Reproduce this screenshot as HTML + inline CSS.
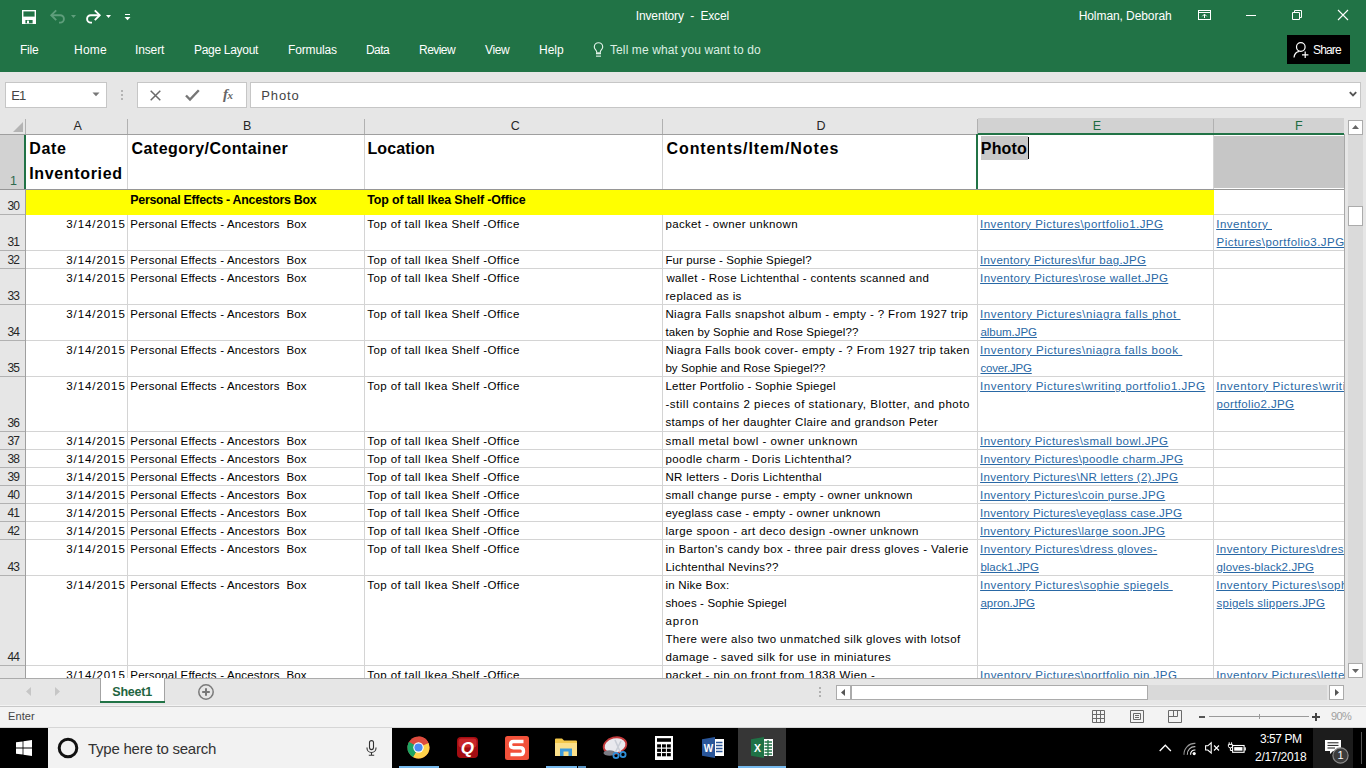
<!DOCTYPE html>
<html><head><meta charset="utf-8"><title>Inventory - Excel</title>
<style>
html,body{margin:0;padding:0}
body{width:1366px;height:768px;overflow:hidden;position:relative;background:#e6e6e6;font-family:"Liberation Sans",sans-serif;}
.t{position:absolute;white-space:pre;line-height:1;display:block}
.b{position:absolute}
svg{position:absolute;overflow:visible}
#cells{position:absolute;left:0;top:0;width:1344px;height:678px;overflow:hidden}
</style></head><body>
<div class="b" style="left:0px;top:0px;width:1366px;height:72px;background:#217346;"></div><div class="b" style="left:5px;top:82px;width:102px;height:26px;background:#fff;border:1px solid #c6c6c6;box-sizing:border-box;"></div><div class="b" style="left:137px;top:82px;width:110px;height:26px;background:#fff;border:1px solid #c6c6c6;box-sizing:border-box;"></div><div class="b" style="left:250px;top:82px;width:1111px;height:26px;background:#fff;border:1px solid #c6c6c6;box-sizing:border-box;"></div><svg style="left:22px;top:10px" width="14" height="14" viewBox="0 0 14 14" ><rect x="0.7" y="0.7" width="12.6" height="12.6" fill="none" stroke="#fff" stroke-width="1.4"/><rect x="1" y="6.6" width="12" height="7" fill="#fff"/><rect x="3.4" y="10" width="7.2" height="3.4" fill="#217346"/><rect x="5" y="10.6" width="2" height="2.8" fill="#fff"/></svg><svg style="left:50px;top:9px" width="16" height="15" viewBox="0 0 16 15" ><path d="M1.3 6.2H10.2A3.7 3.7 0 0 1 10.2 13.6H9" fill="none" stroke="#5f9e7c" stroke-width="1.9"/><path d="M6.2 1.3L1.3 6.2L6.2 11.1" fill="none" stroke="#5f9e7c" stroke-width="1.9"/></svg><svg style="left:71px;top:15px" width="6" height="3" viewBox="0 0 6 3" ><path d="M0 0H5L2.5 3Z" fill="#5f9e7c"/></svg><svg style="left:85px;top:9px" width="16" height="15" viewBox="0 0 16 15" ><path d="M14.7 6.2H5.8A3.7 3.7 0 0 0 5.8 13.6H7" fill="none" stroke="#fff" stroke-width="1.9"/><path d="M9.8 1.3L14.7 6.2L9.8 11.1" fill="none" stroke="#fff" stroke-width="1.9"/></svg><svg style="left:106px;top:15px" width="6" height="3" viewBox="0 0 6 3" ><path d="M0 0H5L2.5 3Z" fill="#fff"/></svg><svg style="left:124px;top:13px" width="7" height="8" viewBox="0 0 7 8" ><rect x="1" y="1" width="5" height="1" fill="#fff"/><path d="M0.5 4H6.5L3.5 7.3Z" fill="#fff"/></svg><svg style="left:1198px;top:10px" width="14" height="11" viewBox="0 0 14 11" ><rect x="0.5" y="0.5" width="12" height="9" fill="none" stroke="#fff" stroke-width="1"/><path d="M0.5 2.5H12.5M6.5 8V4.3M4.3 6.3L6.5 4.1L8.7 6.3" fill="none" stroke="#fff" stroke-width="1"/></svg><div class="b" style="left:1246px;top:15px;width:10px;height:1px;background:#fff;"></div><svg style="left:1292px;top:10px" width="10" height="10" viewBox="0 0 10 10" ><path d="M0.5 2.5H7.5V9.5H0.5ZM2.5 2.5V0.5H9.5V7.5H7.5" fill="none" stroke="#fff" stroke-width="1"/></svg><svg style="left:1338px;top:10px" width="10" height="10" viewBox="0 0 10 10" ><path d="M0 0L10 10M10 0L0 10" stroke="#fff" stroke-width="1.1"/></svg><svg style="left:593px;top:41.5px" width="11" height="16" viewBox="0 0 11 16" ><path d="M3.6 10.6V9.6C3.6 8.1 1.3 7.3 1.3 4.9A4.2 4.2 0 0 1 9.7 4.9C9.7 7.3 7.4 8.1 7.4 9.6V10.6" fill="none" stroke="#e2f3e9" stroke-width="1.15"/><rect x="3" y="10.3" width="5" height="2" fill="#e2f3e9"/><rect x="3" y="13.6" width="5" height="1.1" fill="#e2f3e9"/></svg><div class="b" style="left:1287px;top:35px;width:63px;height:29px;background:#000;"></div><svg style="left:1293px;top:41px" width="17" height="18" viewBox="0 0 17 18" ><circle cx="7.8" cy="6" r="4.3" fill="none" stroke="#fff" stroke-width="1.2"/><path d="M1 16.5C1.4 12.6 4 10.6 6.4 10.3" fill="none" stroke="#fff" stroke-width="1.2"/><path d="M9 13.8H15.4M12.2 10.6V17" stroke="#fff" stroke-width="1.2"/></svg><svg style="left:92px;top:92px" width="9" height="5" viewBox="0 0 9 5" ><path d="M0.5 0.5H7.5L4 4.3Z" fill="#777"/></svg><div class="b" style="left:121px;top:90px;width:2px;height:2px;background:#b4b4b4;"></div><div class="b" style="left:121px;top:94px;width:2px;height:2px;background:#b4b4b4;"></div><div class="b" style="left:121px;top:98px;width:2px;height:2px;background:#b4b4b4;"></div><svg style="left:150px;top:90px" width="11" height="11" viewBox="0 0 11 11" ><path d="M0.7 0.7L10.3 10.3M10.3 0.7L0.7 10.3" stroke="#6a6a6a" stroke-width="1.5"/></svg><svg style="left:185px;top:89px" width="15" height="12" viewBox="0 0 15 12" ><path d="M1 6.5L5 10.5L13.8 1.2" fill="none" stroke="#767676" stroke-width="2.4"/></svg><span class="t" style="left:223px;top:86px;font:italic bold 15px 'Liberation Serif',serif;color:#666;letter-spacing:-0.5px">f<span style="font-size:11px">x</span></span><svg style="left:1349px;top:91px" width="8" height="6" viewBox="0 0 8 6" ><path d="M0.8 1.2L4 4.4L7.2 1.2" fill="none" stroke="#555" stroke-width="1.9"/></svg><div id="cells"><div class="b" style="left:0px;top:118px;width:1344px;height:16px;background:#e6e6e6;"></div><div class="b" style="left:978px;top:118px;width:366px;height:16px;background:#d2d2d2;"></div><div class="b" style="left:26px;top:135px;width:1318px;height:543px;background:#fff;"></div><div class="b" style="left:0px;top:135px;width:25px;height:543px;background:#e6e6e6;"></div><div class="b" style="left:0px;top:135px;width:25px;height:54px;background:#d2d2d2;"></div><div class="b" style="left:25px;top:119px;width:1px;height:15px;background:#b1b1b1;"></div><div class="b" style="left:127px;top:119px;width:1px;height:15px;background:#b1b1b1;"></div><div class="b" style="left:364px;top:119px;width:1px;height:15px;background:#b1b1b1;"></div><div class="b" style="left:662px;top:119px;width:1px;height:15px;background:#b1b1b1;"></div><div class="b" style="left:977px;top:119px;width:1px;height:15px;background:#b1b1b1;"></div><div class="b" style="left:1213px;top:119px;width:1px;height:15px;background:#b1b1b1;"></div><div class="b" style="left:0px;top:134px;width:1344px;height:1px;background:#9f9f9f;"></div><div class="b" style="left:25px;top:135px;width:1px;height:543px;background:#9f9f9f;"></div><div class="b" style="left:127px;top:135px;width:1px;height:543px;background:#d4d4d4;"></div><div class="b" style="left:364px;top:135px;width:1px;height:543px;background:#d4d4d4;"></div><div class="b" style="left:662px;top:135px;width:1px;height:543px;background:#d4d4d4;"></div><div class="b" style="left:977px;top:135px;width:1px;height:543px;background:#d4d4d4;"></div><div class="b" style="left:1213px;top:135px;width:1px;height:543px;background:#d4d4d4;"></div><div class="b" style="left:26px;top:189px;width:1318px;height:1px;background:#d4d4d4;"></div><div class="b" style="left:0px;top:189px;width:25px;height:1px;background:#b1b1b1;"></div><div class="b" style="left:26px;top:214px;width:1318px;height:1px;background:#d4d4d4;"></div><div class="b" style="left:0px;top:214px;width:25px;height:1px;background:#b1b1b1;"></div><div class="b" style="left:26px;top:250px;width:1318px;height:1px;background:#d4d4d4;"></div><div class="b" style="left:0px;top:250px;width:25px;height:1px;background:#b1b1b1;"></div><div class="b" style="left:26px;top:268px;width:1318px;height:1px;background:#d4d4d4;"></div><div class="b" style="left:0px;top:268px;width:25px;height:1px;background:#b1b1b1;"></div><div class="b" style="left:26px;top:304px;width:1318px;height:1px;background:#d4d4d4;"></div><div class="b" style="left:0px;top:304px;width:25px;height:1px;background:#b1b1b1;"></div><div class="b" style="left:26px;top:340px;width:1318px;height:1px;background:#d4d4d4;"></div><div class="b" style="left:0px;top:340px;width:25px;height:1px;background:#b1b1b1;"></div><div class="b" style="left:26px;top:376px;width:1318px;height:1px;background:#d4d4d4;"></div><div class="b" style="left:0px;top:376px;width:25px;height:1px;background:#b1b1b1;"></div><div class="b" style="left:26px;top:431px;width:1318px;height:1px;background:#d4d4d4;"></div><div class="b" style="left:0px;top:431px;width:25px;height:1px;background:#b1b1b1;"></div><div class="b" style="left:26px;top:449px;width:1318px;height:1px;background:#d4d4d4;"></div><div class="b" style="left:0px;top:449px;width:25px;height:1px;background:#b1b1b1;"></div><div class="b" style="left:26px;top:467px;width:1318px;height:1px;background:#d4d4d4;"></div><div class="b" style="left:0px;top:467px;width:25px;height:1px;background:#b1b1b1;"></div><div class="b" style="left:26px;top:485px;width:1318px;height:1px;background:#d4d4d4;"></div><div class="b" style="left:0px;top:485px;width:25px;height:1px;background:#b1b1b1;"></div><div class="b" style="left:26px;top:503px;width:1318px;height:1px;background:#d4d4d4;"></div><div class="b" style="left:0px;top:503px;width:25px;height:1px;background:#b1b1b1;"></div><div class="b" style="left:26px;top:521px;width:1318px;height:1px;background:#d4d4d4;"></div><div class="b" style="left:0px;top:521px;width:25px;height:1px;background:#b1b1b1;"></div><div class="b" style="left:26px;top:539px;width:1318px;height:1px;background:#d4d4d4;"></div><div class="b" style="left:0px;top:539px;width:25px;height:1px;background:#b1b1b1;"></div><div class="b" style="left:26px;top:575px;width:1318px;height:1px;background:#d4d4d4;"></div><div class="b" style="left:0px;top:575px;width:25px;height:1px;background:#b1b1b1;"></div><div class="b" style="left:26px;top:665px;width:1318px;height:1px;background:#d4d4d4;"></div><div class="b" style="left:0px;top:665px;width:25px;height:1px;background:#b1b1b1;"></div><div class="b" style="left:0px;top:189px;width:1344px;height:1px;background:#969696;"></div><div class="b" style="left:26px;top:190px;width:1188px;height:25px;background:#ffff00;"></div><div class="b" style="left:1214px;top:136px;width:130px;height:52px;background:#c6c6c6;"></div><div class="b" style="left:978px;top:136px;width:235px;height:53px;background:#fff;"></div><div class="b" style="left:981px;top:136px;width:47px;height:24px;background:#c8c8c8;"></div><div class="b" style="left:1028px;top:137px;width:1px;height:22px;background:#000;"></div><div class="b" style="left:978px;top:133px;width:366px;height:2px;background:#217346;"></div><div class="b" style="left:976px;top:134px;width:2px;height:55px;background:#217346;"></div><div class="b" style="left:24px;top:135px;width:2px;height:54px;background:#217346;"></div><svg style="left:13px;top:122px" width="10" height="10"><path d="M10 0V10H0Z" fill="#b4b4b4"/></svg><span class="t" style="left:29.20px;top:141.00px;font-size:16px;font-weight:700;letter-spacing:0.673px;">Date</span>
<span class="t" style="left:29.20px;top:166.00px;font-size:16px;font-weight:700;letter-spacing:0.654px;">Inventoried</span>
<span class="t" style="left:131.50px;top:141.00px;font-size:16px;font-weight:700;letter-spacing:0.456px;">Category/Container</span>
<span class="t" style="left:367.50px;top:141.00px;font-size:16px;font-weight:700;letter-spacing:0.087px;">Location</span>
<span class="t" style="left:666.50px;top:141.00px;font-size:16px;font-weight:700;letter-spacing:0.907px;">Contents/Item/Notes</span>
<span class="t" style="left:980.80px;top:141.00px;font-size:16px;font-weight:700;letter-spacing:0.163px;">Photo</span>
<span class="t" style="left:130.30px;top:194.00px;font-size:12.4px;font-weight:700;letter-spacing:-0.283px;">Personal Effects - Ancestors Box</span>
<span class="t" style="left:367.30px;top:194.00px;font-size:12.4px;font-weight:700;letter-spacing:-0.133px;">Top of tall Ikea Shelf -Office</span>
<span class="t" style="left:66.20px;top:219.00px;font-size:11.5px;letter-spacing:0.929px;">3/14/2015</span>
<span class="t" style="left:130.30px;top:219.00px;font-size:11.5px;letter-spacing:0.183px;">Personal Effects - Ancestors  Box</span>
<span class="t" style="left:367.30px;top:219.00px;font-size:11.5px;letter-spacing:0.399px;">Top of tall Ikea Shelf -Office</span>
<span class="t" style="left:66.20px;top:255.00px;font-size:11.5px;letter-spacing:0.929px;">3/14/2015</span>
<span class="t" style="left:130.30px;top:255.00px;font-size:11.5px;letter-spacing:0.183px;">Personal Effects - Ancestors  Box</span>
<span class="t" style="left:367.30px;top:255.00px;font-size:11.5px;letter-spacing:0.399px;">Top of tall Ikea Shelf -Office</span>
<span class="t" style="left:66.20px;top:273.00px;font-size:11.5px;letter-spacing:0.929px;">3/14/2015</span>
<span class="t" style="left:130.30px;top:273.00px;font-size:11.5px;letter-spacing:0.183px;">Personal Effects - Ancestors  Box</span>
<span class="t" style="left:367.30px;top:273.00px;font-size:11.5px;letter-spacing:0.399px;">Top of tall Ikea Shelf -Office</span>
<span class="t" style="left:66.20px;top:309.00px;font-size:11.5px;letter-spacing:0.929px;">3/14/2015</span>
<span class="t" style="left:130.30px;top:309.00px;font-size:11.5px;letter-spacing:0.183px;">Personal Effects - Ancestors  Box</span>
<span class="t" style="left:367.30px;top:309.00px;font-size:11.5px;letter-spacing:0.399px;">Top of tall Ikea Shelf -Office</span>
<span class="t" style="left:66.20px;top:345.00px;font-size:11.5px;letter-spacing:0.929px;">3/14/2015</span>
<span class="t" style="left:130.30px;top:345.00px;font-size:11.5px;letter-spacing:0.183px;">Personal Effects - Ancestors  Box</span>
<span class="t" style="left:367.30px;top:345.00px;font-size:11.5px;letter-spacing:0.399px;">Top of tall Ikea Shelf -Office</span>
<span class="t" style="left:66.20px;top:381.00px;font-size:11.5px;letter-spacing:0.929px;">3/14/2015</span>
<span class="t" style="left:130.30px;top:381.00px;font-size:11.5px;letter-spacing:0.183px;">Personal Effects - Ancestors  Box</span>
<span class="t" style="left:367.30px;top:381.00px;font-size:11.5px;letter-spacing:0.399px;">Top of tall Ikea Shelf -Office</span>
<span class="t" style="left:66.20px;top:436.00px;font-size:11.5px;letter-spacing:0.929px;">3/14/2015</span>
<span class="t" style="left:130.30px;top:436.00px;font-size:11.5px;letter-spacing:0.183px;">Personal Effects - Ancestors  Box</span>
<span class="t" style="left:367.30px;top:436.00px;font-size:11.5px;letter-spacing:0.399px;">Top of tall Ikea Shelf -Office</span>
<span class="t" style="left:66.20px;top:454.00px;font-size:11.5px;letter-spacing:0.929px;">3/14/2015</span>
<span class="t" style="left:130.30px;top:454.00px;font-size:11.5px;letter-spacing:0.183px;">Personal Effects - Ancestors  Box</span>
<span class="t" style="left:367.30px;top:454.00px;font-size:11.5px;letter-spacing:0.399px;">Top of tall Ikea Shelf -Office</span>
<span class="t" style="left:66.20px;top:472.00px;font-size:11.5px;letter-spacing:0.929px;">3/14/2015</span>
<span class="t" style="left:130.30px;top:472.00px;font-size:11.5px;letter-spacing:0.183px;">Personal Effects - Ancestors  Box</span>
<span class="t" style="left:367.30px;top:472.00px;font-size:11.5px;letter-spacing:0.399px;">Top of tall Ikea Shelf -Office</span>
<span class="t" style="left:66.20px;top:490.00px;font-size:11.5px;letter-spacing:0.929px;">3/14/2015</span>
<span class="t" style="left:130.30px;top:490.00px;font-size:11.5px;letter-spacing:0.183px;">Personal Effects - Ancestors  Box</span>
<span class="t" style="left:367.30px;top:490.00px;font-size:11.5px;letter-spacing:0.399px;">Top of tall Ikea Shelf -Office</span>
<span class="t" style="left:66.20px;top:508.00px;font-size:11.5px;letter-spacing:0.929px;">3/14/2015</span>
<span class="t" style="left:130.30px;top:508.00px;font-size:11.5px;letter-spacing:0.183px;">Personal Effects - Ancestors  Box</span>
<span class="t" style="left:367.30px;top:508.00px;font-size:11.5px;letter-spacing:0.399px;">Top of tall Ikea Shelf -Office</span>
<span class="t" style="left:66.20px;top:526.00px;font-size:11.5px;letter-spacing:0.929px;">3/14/2015</span>
<span class="t" style="left:130.30px;top:526.00px;font-size:11.5px;letter-spacing:0.183px;">Personal Effects - Ancestors  Box</span>
<span class="t" style="left:367.30px;top:526.00px;font-size:11.5px;letter-spacing:0.399px;">Top of tall Ikea Shelf -Office</span>
<span class="t" style="left:66.20px;top:544.00px;font-size:11.5px;letter-spacing:0.929px;">3/14/2015</span>
<span class="t" style="left:130.30px;top:544.00px;font-size:11.5px;letter-spacing:0.183px;">Personal Effects - Ancestors  Box</span>
<span class="t" style="left:367.30px;top:544.00px;font-size:11.5px;letter-spacing:0.399px;">Top of tall Ikea Shelf -Office</span>
<span class="t" style="left:66.20px;top:580.00px;font-size:11.5px;letter-spacing:0.929px;">3/14/2015</span>
<span class="t" style="left:130.30px;top:580.00px;font-size:11.5px;letter-spacing:0.183px;">Personal Effects - Ancestors  Box</span>
<span class="t" style="left:367.30px;top:580.00px;font-size:11.5px;letter-spacing:0.399px;">Top of tall Ikea Shelf -Office</span>
<span class="t" style="left:66.20px;top:670.00px;font-size:11.5px;letter-spacing:0.929px;">3/14/2015</span>
<span class="t" style="left:130.30px;top:670.00px;font-size:11.5px;letter-spacing:0.183px;">Personal Effects - Ancestors  Box</span>
<span class="t" style="left:367.30px;top:670.00px;font-size:11.5px;letter-spacing:0.399px;">Top of tall Ikea Shelf -Office</span>
<span class="t" style="left:665.40px;top:219.00px;font-size:11.5px;letter-spacing:0.359px;">packet - owner unknown</span>
<span class="t" style="left:665.40px;top:255.00px;font-size:11.5px;letter-spacing:0.119px;">Fur purse - Sophie Spiegel?</span>
<span class="t" style="left:666.40px;top:273.00px;font-size:11.5px;letter-spacing:0.306px;">wallet - Rose Lichtenthal - contents scanned and</span>
<span class="t" style="left:665.40px;top:291.00px;font-size:11.5px;letter-spacing:0.384px;">replaced as is</span>
<span class="t" style="left:665.40px;top:309.00px;font-size:11.5px;letter-spacing:0.391px;">Niagra Falls snapshot album - empty - ? From 1927 trip</span>
<span class="t" style="left:665.40px;top:327.00px;font-size:11.5px;letter-spacing:0.114px;">taken by Sophie and Rose Spiegel??</span>
<span class="t" style="left:665.40px;top:345.00px;font-size:11.5px;letter-spacing:0.351px;">Niagra Falls book cover- empty - ? From 1927 trip taken</span>
<span class="t" style="left:665.40px;top:363.00px;font-size:11.5px;letter-spacing:0.077px;">by Sophie and Rose Spiegel??</span>
<span class="t" style="left:665.40px;top:381.00px;font-size:11.5px;letter-spacing:0.243px;">Letter Portfolio - Sophie Spiegel</span>
<span class="t" style="left:665.40px;top:399.00px;font-size:11.5px;letter-spacing:0.526px;">-still contains 2 pieces of stationary, Blotter, and photo</span>
<span class="t" style="left:665.40px;top:417.00px;font-size:11.5px;letter-spacing:0.356px;">stamps of her daughter Claire and grandson Peter</span>
<span class="t" style="left:665.40px;top:436.00px;font-size:11.5px;letter-spacing:0.523px;">small metal bowl - owner unknown</span>
<span class="t" style="left:665.40px;top:454.00px;font-size:11.5px;letter-spacing:0.439px;">poodle charm - Doris Lichtenthal?</span>
<span class="t" style="left:665.40px;top:472.00px;font-size:11.5px;letter-spacing:0.316px;">NR letters - Doris Lichtenthal</span>
<span class="t" style="left:665.40px;top:490.00px;font-size:11.5px;letter-spacing:0.365px;">small change purse - empty - owner unknown</span>
<span class="t" style="left:665.40px;top:508.00px;font-size:11.5px;letter-spacing:0.273px;">eyeglass case - empty - owner unknown</span>
<span class="t" style="left:665.40px;top:526.00px;font-size:11.5px;letter-spacing:0.383px;">large spoon - art deco design -owner unknown</span>
<span class="t" style="left:665.40px;top:544.00px;font-size:11.5px;letter-spacing:0.387px;">in Barton&#x27;s candy box - three pair dress gloves - Valerie</span>
<span class="t" style="left:665.40px;top:562.00px;font-size:11.5px;letter-spacing:0.328px;">Lichtenthal Nevins??</span>
<span class="t" style="left:665.40px;top:580.00px;font-size:11.5px;letter-spacing:0.222px;">in Nike Box:</span>
<span class="t" style="left:665.40px;top:598.00px;font-size:11.5px;letter-spacing:0.137px;">shoes - Sophie Spiegel</span>
<span class="t" style="left:665.40px;top:616.00px;font-size:11.5px;letter-spacing:0.896px;">apron</span>
<span class="t" style="left:665.40px;top:634.00px;font-size:11.5px;letter-spacing:0.396px;">There were also two unmatched silk gloves with lotsof</span>
<span class="t" style="left:665.40px;top:652.00px;font-size:11.5px;letter-spacing:0.408px;">damage - saved silk for use in miniatures</span>
<span class="t" style="left:665.40px;top:670.00px;font-size:11.5px;letter-spacing:0.443px;">packet - pin on front from 1838 Wien -</span>
<span class="t" style="left:980.10px;top:219.00px;font-size:11.5px;color:#2968a5;letter-spacing:0.461px;text-decoration:underline;text-underline-offset:1px;text-decoration-thickness:1px;">Inventory Pictures\portfolio1.JPG</span>
<span class="t" style="left:980.10px;top:255.00px;font-size:11.5px;color:#2968a5;letter-spacing:0.319px;text-decoration:underline;text-underline-offset:1px;text-decoration-thickness:1px;">Inventory Pictures\fur bag.JPG</span>
<span class="t" style="left:980.10px;top:273.00px;font-size:11.5px;color:#2968a5;letter-spacing:0.366px;text-decoration:underline;text-underline-offset:1px;text-decoration-thickness:1px;">Inventory Pictures\rose wallet.JPG</span>
<span class="t" style="left:980.10px;top:309.00px;font-size:11.5px;color:#2968a5;letter-spacing:0.562px;text-decoration:underline;text-underline-offset:1px;text-decoration-thickness:1px;">Inventory Pictures\niagra falls phot </span>
<span class="t" style="left:980.50px;top:327.00px;font-size:11.5px;color:#2968a5;letter-spacing:-0.055px;text-decoration:underline;text-underline-offset:1px;text-decoration-thickness:1px;">album.JPG</span>
<span class="t" style="left:980.10px;top:345.00px;font-size:11.5px;color:#2968a5;letter-spacing:0.542px;text-decoration:underline;text-underline-offset:1px;text-decoration-thickness:1px;">Inventory Pictures\niagra falls book </span>
<span class="t" style="left:980.50px;top:363.00px;font-size:11.5px;color:#2968a5;letter-spacing:-0.200px;text-decoration:underline;text-underline-offset:1px;text-decoration-thickness:1px;">cover.JPG</span>
<span class="t" style="left:980.10px;top:381.00px;font-size:11.5px;color:#2968a5;letter-spacing:0.508px;text-decoration:underline;text-underline-offset:1px;text-decoration-thickness:1px;">Inventory Pictures\writing portfolio1.JPG</span>
<span class="t" style="left:980.10px;top:436.00px;font-size:11.5px;color:#2968a5;letter-spacing:0.418px;text-decoration:underline;text-underline-offset:1px;text-decoration-thickness:1px;">Inventory Pictures\small bowl.JPG</span>
<span class="t" style="left:980.10px;top:454.00px;font-size:11.5px;color:#2968a5;letter-spacing:0.364px;text-decoration:underline;text-underline-offset:1px;text-decoration-thickness:1px;">Inventory Pictures\poodle charm.JPG</span>
<span class="t" style="left:980.10px;top:472.00px;font-size:11.5px;color:#2968a5;letter-spacing:0.241px;text-decoration:underline;text-underline-offset:1px;text-decoration-thickness:1px;">Inventory Pictures\NR letters (2).JPG</span>
<span class="t" style="left:980.10px;top:490.00px;font-size:11.5px;color:#2968a5;letter-spacing:0.343px;text-decoration:underline;text-underline-offset:1px;text-decoration-thickness:1px;">Inventory Pictures\coin purse.JPG</span>
<span class="t" style="left:980.10px;top:508.00px;font-size:11.5px;color:#2968a5;letter-spacing:0.234px;text-decoration:underline;text-underline-offset:1px;text-decoration-thickness:1px;">Inventory Pictures\eyeglass case.JPG</span>
<span class="t" style="left:980.10px;top:526.00px;font-size:11.5px;color:#2968a5;letter-spacing:0.323px;text-decoration:underline;text-underline-offset:1px;text-decoration-thickness:1px;">Inventory Pictures\large soon.JPG</span>
<span class="t" style="left:980.10px;top:544.00px;font-size:11.5px;color:#2968a5;letter-spacing:0.423px;text-decoration:underline;text-underline-offset:1px;text-decoration-thickness:1px;">Inventory Pictures\dress gloves-</span>
<span class="t" style="left:980.50px;top:562.00px;font-size:11.5px;color:#2968a5;letter-spacing:-0.040px;text-decoration:underline;text-underline-offset:1px;text-decoration-thickness:1px;">black1.JPG</span>
<span class="t" style="left:980.10px;top:580.00px;font-size:11.5px;color:#2968a5;letter-spacing:0.428px;text-decoration:underline;text-underline-offset:1px;text-decoration-thickness:1px;">Inventory Pictures\sophie spiegels </span>
<span class="t" style="left:980.50px;top:598.00px;font-size:11.5px;color:#2968a5;letter-spacing:-0.066px;text-decoration:underline;text-underline-offset:1px;text-decoration-thickness:1px;">apron.JPG</span>
<span class="t" style="left:980.10px;top:670.00px;font-size:11.5px;color:#2968a5;letter-spacing:0.474px;text-decoration:underline;text-underline-offset:1px;text-decoration-thickness:1px;">Inventory Pictures\portfolio pin.JPG</span>
<span class="t" style="left:1216.20px;top:219.00px;font-size:11.5px;color:#2968a5;letter-spacing:0.531px;text-decoration:underline;text-underline-offset:1px;text-decoration-thickness:1px;">Inventory </span>
<span class="t" style="left:1216.60px;top:237.00px;font-size:11.5px;color:#2968a5;letter-spacing:0.450px;text-decoration:underline;text-underline-offset:1px;text-decoration-thickness:1px;">Pictures\portfolio3.JPG</span>
<span class="t" style="left:1216.20px;top:381.00px;font-size:11.5px;color:#2968a5;letter-spacing:0.580px;text-decoration:underline;text-underline-offset:1px;text-decoration-thickness:1px;">Inventory Pictures\writing </span>
<span class="t" style="left:1216.60px;top:399.00px;font-size:11.5px;color:#2968a5;letter-spacing:0.344px;text-decoration:underline;text-underline-offset:1px;text-decoration-thickness:1px;">portfolio2.JPG</span>
<span class="t" style="left:1216.20px;top:544.00px;font-size:11.5px;color:#2968a5;letter-spacing:0.440px;text-decoration:underline;text-underline-offset:1px;text-decoration-thickness:1px;">Inventory Pictures\dress </span>
<span class="t" style="left:1216.60px;top:562.00px;font-size:11.5px;color:#2968a5;letter-spacing:0.092px;text-decoration:underline;text-underline-offset:1px;text-decoration-thickness:1px;">gloves-black2.JPG</span>
<span class="t" style="left:1216.20px;top:580.00px;font-size:11.5px;color:#2968a5;letter-spacing:0.500px;text-decoration:underline;text-underline-offset:1px;text-decoration-thickness:1px;">Inventory Pictures\sophie </span>
<span class="t" style="left:1216.60px;top:598.00px;font-size:11.5px;color:#2968a5;letter-spacing:0.219px;text-decoration:underline;text-underline-offset:1px;text-decoration-thickness:1px;">spigels slippers.JPG</span>
<span class="t" style="left:1216.20px;top:670.00px;font-size:11.5px;color:#2968a5;letter-spacing:0.490px;text-decoration:underline;text-underline-offset:1px;text-decoration-thickness:1px;">Inventory Pictures\letters</span>
<span class="t" style="left:10.10px;top:175.00px;font-size:12.5px;color:#2f6a4d;">1</span>
<span class="t" style="left:7.60px;top:200.00px;font-size:12px;color:#262626;letter-spacing:-0.900px;">30</span>
<span class="t" style="left:7.60px;top:236.00px;font-size:12px;color:#262626;letter-spacing:-0.900px;">31</span>
<span class="t" style="left:7.60px;top:254.00px;font-size:12px;color:#262626;letter-spacing:-0.900px;">32</span>
<span class="t" style="left:7.60px;top:290.00px;font-size:12px;color:#262626;letter-spacing:-0.900px;">33</span>
<span class="t" style="left:7.60px;top:326.00px;font-size:12px;color:#262626;letter-spacing:-0.900px;">34</span>
<span class="t" style="left:7.60px;top:362.00px;font-size:12px;color:#262626;letter-spacing:-0.900px;">35</span>
<span class="t" style="left:7.60px;top:417.00px;font-size:12px;color:#262626;letter-spacing:-0.900px;">36</span>
<span class="t" style="left:7.60px;top:435.00px;font-size:12px;color:#262626;letter-spacing:-0.900px;">37</span>
<span class="t" style="left:7.60px;top:453.00px;font-size:12px;color:#262626;letter-spacing:-0.900px;">38</span>
<span class="t" style="left:7.60px;top:471.00px;font-size:12px;color:#262626;letter-spacing:-0.900px;">39</span>
<span class="t" style="left:7.60px;top:489.00px;font-size:12px;color:#262626;letter-spacing:-0.900px;">40</span>
<span class="t" style="left:7.60px;top:507.00px;font-size:12px;color:#262626;letter-spacing:-0.900px;">41</span>
<span class="t" style="left:7.60px;top:525.00px;font-size:12px;color:#262626;letter-spacing:-0.900px;">42</span>
<span class="t" style="left:7.60px;top:561.00px;font-size:12px;color:#262626;letter-spacing:-0.900px;">43</span>
<span class="t" style="left:7.60px;top:651.00px;font-size:12px;color:#262626;letter-spacing:-0.900px;">44</span>
<span class="t" style="left:73.40px;top:120.00px;font-size:12.5px;color:#262626;">A</span>
<span class="t" style="left:242.90px;top:120.00px;font-size:12.5px;color:#262626;">B</span>
<span class="t" style="left:510.80px;top:120.00px;font-size:12.5px;color:#262626;">C</span>
<span class="t" style="left:816.40px;top:120.00px;font-size:12.5px;color:#262626;">D</span>
<span class="t" style="left:1092.80px;top:120.00px;font-size:12.5px;color:#1e6c41;">E</span>
<span class="t" style="left:1295.00px;top:120.00px;font-size:12.5px;color:#1e6c41;">F</span></div><div class="b" style="left:1344px;top:134px;width:1px;height:545px;background:#a8a8a8;"></div><div class="b" style="left:1345px;top:118px;width:21px;height:561px;background:#e6e6e6;"></div><div class="b" style="left:1348px;top:135px;width:15px;height:528px;background:#dadada;"></div><div class="b" style="left:1348px;top:120px;width:15px;height:15px;background:#fff;border:1px solid #ababab;box-sizing:border-box;"></div><div class="b" style="left:1348px;top:663px;width:15px;height:15px;background:#fff;border:1px solid #ababab;box-sizing:border-box;"></div><div class="b" style="left:1348px;top:206px;width:15px;height:20px;background:#fff;border:1px solid #ababab;box-sizing:border-box;"></div><svg style="left:1352px;top:125px" width="7" height="4"><path d="M0 4L3.5 0L7 4Z" fill="#666"/></svg><svg style="left:1352px;top:669px" width="7" height="4"><path d="M0 0L3.5 4L7 0Z" fill="#666"/></svg><div class="b" style="left:0px;top:678px;width:1345px;height:1px;background:#ababab;"></div><div class="b" style="left:0px;top:679px;width:1366px;height:26px;background:#e6e6e6;"></div><div class="b" style="left:100px;top:678px;width:65px;height:25px;background:#fff;border-left:1px solid #a3a3a3;border-right:1px solid #a3a3a3;box-sizing:border-box;"></div><div class="b" style="left:100px;top:701px;width:65px;height:2px;background:#217346;"></div><svg style="left:26px;top:687px" width="6" height="9"><path d="M5 0L0 4.5L5 9Z" fill="#c6c6c6"/></svg><svg style="left:55px;top:687px" width="6" height="9"><path d="M0 0L5 4.5L0 9Z" fill="#c6c6c6"/></svg><svg style="left:198px;top:684px" width="16" height="16"><circle cx="8" cy="8" r="7.2" fill="none" stroke="#7a7a7a" stroke-width="1.5"/><path d="M4.2 8H11.8M8 4.2V11.8" stroke="#777" stroke-width="2"/></svg><div class="b" style="left:819px;top:687px;width:2px;height:2px;background:#b0b0b0;"></div><div class="b" style="left:819px;top:691px;width:2px;height:2px;background:#b0b0b0;"></div><div class="b" style="left:819px;top:695px;width:2px;height:2px;background:#b0b0b0;"></div><div class="b" style="left:836px;top:685px;width:491px;height:15px;background:#d9d9d9;"></div><div class="b" style="left:836px;top:685px;width:15px;height:15px;background:#fff;border:1px solid #ababab;box-sizing:border-box;"></div><div class="b" style="left:1329px;top:685px;width:15px;height:15px;background:#fff;border:1px solid #ababab;box-sizing:border-box;"></div><div class="b" style="left:851px;top:685px;width:297px;height:15px;background:#fff;border:1px solid #ababab;box-sizing:border-box;"></div><svg style="left:841px;top:689px" width="4" height="7"><path d="M4 0L0 3.5L4 7Z" fill="#555"/></svg><svg style="left:1335px;top:689px" width="4" height="7"><path d="M0 0L4 3.5L0 7Z" fill="#555"/></svg><div class="b" style="left:0px;top:705px;width:1366px;height:23px;background:#f3f3f3;"></div><div class="b" style="left:0px;top:728px;width:1366px;height:40px;background:#000;"></div><div class="b" style="left:48px;top:728px;width:344px;height:40px;background:#f2f2f2;"></div><div class="b" style="left:0px;top:706px;width:1366px;height:1px;background:#c8c8c8;"></div><div class="b" style="left:0px;top:727px;width:1366px;height:1px;background:#d6d6d6;"></div><svg style="left:1092px;top:710px" width="13" height="13" viewBox="0 0 13 13" ><path d="M0.5 0.5H12.5V12.5H0.5ZM0.5 4.5H12.5M0.5 8.5H12.5M4.5 0.5V12.5M8.5 0.5V12.5" fill="none" stroke="#6a6a6a" stroke-width="1"/></svg><svg style="left:1130px;top:710px" width="14" height="13" viewBox="0 0 14 13" ><path d="M0.5 0.5H13.5V12.5H0.5Z" fill="none" stroke="#6a6a6a" stroke-width="1"/><path d="M3.5 3.5H10.5V9.5H3.5ZM5 5.5H9M5 7.5H9" fill="none" stroke="#6a6a6a" stroke-width="1"/></svg><svg style="left:1168px;top:710px" width="14" height="13" viewBox="0 0 14 13" ><path d="M0.5 0.5H13.5V12.5H0.5ZM0.5 6.5H9.5V0.5M5.5 0.5V6.5" fill="none" stroke="#6a6a6a" stroke-width="1"/></svg><div class="b" style="left:1199px;top:716px;width:6px;height:2px;background:#555;"></div><div class="b" style="left:1209px;top:716px;width:100px;height:1px;background:#9a9a9a;"></div><div class="b" style="left:1259px;top:714px;width:1px;height:5px;background:#9a9a9a;"></div><div class="b" style="left:1312px;top:716px;width:8px;height:2px;background:#444;"></div><div class="b" style="left:1315px;top:713px;width:2px;height:8px;background:#444;"></div><svg style="left:16px;top:740px" width="16" height="16" viewBox="0 0 16 16" ><path d="M0 2.3L6.6 1.4V7.6H0ZM7.4 1.3L16 0V7.6H7.4ZM0 8.4H6.6V14.6L0 13.7ZM7.4 8.4H16V16L7.4 14.7Z" fill="#fff"/></svg><svg style="left:57px;top:737px" width="22" height="22" viewBox="0 0 22 22" ><circle cx="11" cy="11" r="8.8" fill="none" stroke="#111" stroke-width="3"/></svg><svg style="left:366px;top:740px" width="11" height="16" viewBox="0 0 11 16" ><rect x="3.5" y="0.6" width="4" height="9" rx="2" fill="none" stroke="#333" stroke-width="1.1"/><path d="M1 7.5V8A4.5 4.5 0 0 0 10 8V7.5M5.5 12.5V15M2.8 15.3H8.2" fill="none" stroke="#333" stroke-width="1.1"/></svg><svg style="left:407px;top:736px" width="23" height="23" viewBox="0 0 23 23" ><circle cx="11.5" cy="11.5" r="11" fill="#dd4b3e"/><path d="M11.5 11.5L1.97 6A11 11 0 0 0 6 21.03Z" fill="#1da462"/><path d="M11.5 11.5L6 21.03A11 11 0 0 0 22.5 11.5L21.6 7Z" fill="#ffd24a"/><path d="M11.5 11.5L6 21.03A11 11 0 0 1 1.97 6Z" fill="#1da462"/><path d="M11.5 0.5A11 11 0 0 1 21.03 6H11.5Z" fill="#dd4b3e"/><circle cx="11.5" cy="11.5" r="5.2" fill="#fff"/><circle cx="11.5" cy="11.5" r="4.1" fill="#4a8af4"/></svg><div class="b" style="left:399px;top:766px;width:40px;height:2px;background:#76b9ed;"></div><svg style="left:457px;top:737px" width="21" height="21" viewBox="0 0 21 21" ><rect x="0" y="0" width="21" height="21" rx="4" fill="#a30d12"/><rect x="1.5" y="1.5" width="18" height="9" rx="3" fill="#c9262a"/><text x="10.3" y="16.6" text-anchor="middle" font-family="Liberation Sans" font-style="italic" font-weight="700" font-size="17" fill="#fff">Q</text></svg><svg style="left:505px;top:736px" width="24" height="24" viewBox="0 0 24 24" ><rect x="0" y="0" width="24" height="24" rx="2.5" fill="#f2513a"/><path d="M18.5 5.5H8.5Q5.5 5.5 5.5 8.6Q5.5 11.8 8.5 11.8H15.5Q18.5 11.8 18.5 15.2Q18.5 18.5 15.5 18.5H5.5" fill="none" stroke="#fff" stroke-width="3.4"/></svg><svg style="left:555px;top:738px" width="22" height="19" viewBox="0 0 22 19" ><path d="M0 1.5Q0 0.5 1 0.5H7L9 2.5H21Q22 2.5 22 3.5V17H0Z" fill="#f3c84b"/><rect x="0" y="5" width="22" height="13" fill="#fbe08a"/><path d="M5 18V10.5H17V18H13.5V13.5H8.5V18Z" fill="#3d9bdc"/></svg><div class="b" style="left:546px;top:766px;width:31px;height:2px;background:#76b9ed;"></div><div class="b" style="left:578px;top:766px;width:8px;height:2px;background:#5a94c4;"></div><svg style="left:603px;top:736px" width="25" height="24" viewBox="0 0 25 24" ><ellipse cx="12" cy="9.5" rx="11.5" ry="8" fill="#e9e9ee" stroke="#c2393b" stroke-width="1.8" transform="rotate(-14 12 9.5)"/><ellipse cx="6.5" cy="17" rx="6" ry="2.8" fill="#7b7b84"/><path d="M12 4L17.5 16.5M18 5L12.5 16" stroke="#c9cdd6" stroke-width="1.6"/><circle cx="13" cy="19.5" r="2.6" fill="none" stroke="#2f8fd8" stroke-width="1.8"/><circle cx="20" cy="18.5" r="2.6" fill="none" stroke="#2f8fd8" stroke-width="1.8"/></svg><svg style="left:655px;top:736px" width="18" height="24" viewBox="0 0 18 24" ><rect x="0" y="0" width="18" height="24" fill="#fff"/><rect x="2" y="2.2" width="14" height="3.6" fill="#000"/><rect x="2.1" y="8.3" width="3.9" height="3.2" fill="#000"/><rect x="7.0" y="8.3" width="3.9" height="3.2" fill="#000"/><rect x="11.9" y="8.3" width="3.9" height="3.2" fill="#000"/><rect x="2.1" y="12.7" width="3.9" height="3.2" fill="#000"/><rect x="7.0" y="12.7" width="3.9" height="3.2" fill="#000"/><rect x="11.9" y="12.7" width="3.9" height="3.2" fill="#000"/><rect x="2.1" y="17.1" width="3.9" height="3.2" fill="#000"/><rect x="7.0" y="17.1" width="3.9" height="3.2" fill="#000"/><rect x="11.9" y="17.1" width="3.9" height="3.2" fill="#000"/></svg><svg style="left:702px;top:737px" width="22" height="21" viewBox="0 0 22 21" ><rect x="9" y="2" width="13" height="17" fill="#fff"/><path d="M14 5.5H20.5M14 8.5H20.5M14 11.5H20.5M14 14.5H20.5" stroke="#2a5699" stroke-width="1.3"/><path d="M0 2.2L13 0V21L0 18.8Z" fill="#2a5699"/><text x="6.5" y="14.8" text-anchor="middle" font-family="Liberation Sans" font-weight="700" font-size="10" fill="#fff">W</text></svg><div class="b" style="left:738px;top:728px;width:48px;height:40px;background:#363636;"></div><div class="b" style="left:738px;top:766px;width:48px;height:2px;background:#76b9ed;"></div><svg style="left:751px;top:737px" width="22" height="21" viewBox="0 0 22 21" ><rect x="9" y="2" width="13" height="17" fill="#fff"/><path d="M13.5 5H21M13.5 8H21M13.5 11H21M13.5 14H21M13.5 17H21M17 3V19" stroke="#1f7246" stroke-width="1.3"/><path d="M0 2.2L13 0V21L0 18.8Z" fill="#1f7246"/><text x="6.5" y="14.6" text-anchor="middle" font-family="Liberation Sans" font-weight="700" font-size="10.5" fill="#fff">X</text></svg><svg style="left:1159px;top:744px" width="13" height="8" viewBox="0 0 13 8" ><path d="M0.7 7L6.3 1.2L11.9 7" fill="none" stroke="#fff" stroke-width="1.3"/></svg><svg style="left:1183px;top:742px" width="14" height="14" viewBox="0 0 14 14" ><circle cx="11.2" cy="11.6" r="1.6" fill="#fff"/><path d="M7.6 12.8A4.3 4.3 0 0 1 12.4 8" fill="none" stroke="#fff" stroke-width="1.1"/><path d="M4.3 12.8A7.5 7.5 0 0 1 12.4 4.7" fill="none" stroke="#bbb" stroke-width="1.1"/><path d="M1 12.8A10.8 10.8 0 0 1 12.4 1.4" fill="none" stroke="#999" stroke-width="1.1"/></svg><svg style="left:1205px;top:742px" width="15" height="12" viewBox="0 0 15 12" ><path d="M0.6 3.8H2.8L6.2 0.8V11L2.8 8H0.6Z" fill="none" stroke="#fff" stroke-width="1.1"/><path d="M9 3.5L14 8.5M14 3.5L9 8.5" stroke="#fff" stroke-width="1.1"/></svg><svg style="left:1228px;top:742px" width="18" height="11" viewBox="0 0 18 11" ><rect x="4.6" y="3.5" width="11.5" height="6.8" fill="none" stroke="#fff" stroke-width="1.1"/><rect x="16.5" y="5.3" width="1.3" height="3.2" fill="#fff"/><rect x="6.2" y="5.1" width="8.3" height="3.6" fill="#fff"/><path d="M1.2 0.3V2.2M3.6 0.3V2.2M0.4 2.4H4.4V4.4Q4.4 5.8 2.4 5.8Q0.4 5.8 0.4 4.4ZM2.4 6V8.5H4.5" fill="none" stroke="#fff" stroke-width="1"/></svg><div class="b" style="left:1313px;top:728px;width:40px;height:40px;background:#1c1c1c;"></div><div class="b" style="left:1361px;top:732px;width:1px;height:32px;background:#555;"></div><svg style="left:1325px;top:740px" width="17" height="15" viewBox="0 0 17 15" ><path d="M0 0H16V11H8L5 14V11H0Z" fill="#fff"/><path d="M2.5 2.8H13.5M2.5 5.4H13.5M2.5 8H10" stroke="#1c1c1c" stroke-width="1"/></svg><svg style="left:1332px;top:747px" width="17" height="17" viewBox="0 0 17 17" ><circle cx="8.5" cy="8.5" r="7.6" fill="#3c3c3c" stroke="#8a8a8a" stroke-width="1.2"/><text x="8.5" y="12.3" text-anchor="middle" font-family="Liberation Sans" font-size="11" fill="#fff">1</text></svg><span class="t" style="left:635.80px;top:10.00px;font-size:12px;color:#fff;letter-spacing:-0.148px;">Inventory  -  Excel</span>
<span class="t" style="left:1078.70px;top:10.00px;font-size:12px;color:#fff;letter-spacing:-0.077px;">Holman, Deborah</span>
<span class="t" style="left:20.00px;top:44.00px;font-size:12px;color:#fff;letter-spacing:-0.221px;">File</span>
<span class="t" style="left:74.00px;top:44.00px;font-size:12px;color:#fff;letter-spacing:0.221px;">Home</span>
<span class="t" style="left:135.00px;top:44.00px;font-size:12px;color:#fff;letter-spacing:-0.136px;">Insert</span>
<span class="t" style="left:194.00px;top:44.00px;font-size:12px;color:#fff;letter-spacing:-0.305px;">Page Layout</span>
<span class="t" style="left:288.00px;top:44.00px;font-size:12px;color:#fff;letter-spacing:-0.144px;">Formulas</span>
<span class="t" style="left:366.00px;top:44.00px;font-size:12px;color:#fff;letter-spacing:-0.558px;">Data</span>
<span class="t" style="left:419.00px;top:44.00px;font-size:12px;color:#fff;letter-spacing:-0.536px;">Review</span>
<span class="t" style="left:485.00px;top:44.00px;font-size:12px;color:#fff;letter-spacing:-0.376px;">View</span>
<span class="t" style="left:539.00px;top:44.00px;font-size:12px;color:#fff;letter-spacing:-0.002px;">Help</span>
<span class="t" style="left:610.00px;top:44.00px;font-size:12px;color:#dcefe3;letter-spacing:0.100px;">Tell me what you want to do</span>
<span class="t" style="left:1313.00px;top:44.00px;font-size:12px;color:#fff;letter-spacing:-0.837px;">Share</span>
<span class="t" style="left:11.20px;top:89.00px;font-size:13px;color:#444;letter-spacing:-0.900px;">E1</span>
<span class="t" style="left:261.30px;top:89.00px;font-size:13px;color:#444;letter-spacing:0.889px;">Photo</span>
<span class="t" style="left:112.30px;top:686.00px;font-size:12.5px;font-weight:700;color:#1f6541;letter-spacing:-0.208px;">Sheet1</span>
<span class="t" style="left:8.00px;top:711.00px;font-size:11px;color:#444;letter-spacing:0.093px;">Enter</span>
<span class="t" style="left:1331.00px;top:711.00px;font-size:11px;color:#a0a0a0;letter-spacing:-0.618px;">90%</span>
<span class="t" style="left:88.00px;top:741.00px;font-size:15px;color:#333;letter-spacing:-0.235px;">Type here to search</span>
<span class="t" style="left:1260.00px;top:733.00px;font-size:12px;color:#fff;letter-spacing:-0.449px;">3:57 PM</span>
<span class="t" style="left:1255.00px;top:751.00px;font-size:12px;color:#fff;letter-spacing:-0.214px;">2/17/2018</span>
</body></html>
